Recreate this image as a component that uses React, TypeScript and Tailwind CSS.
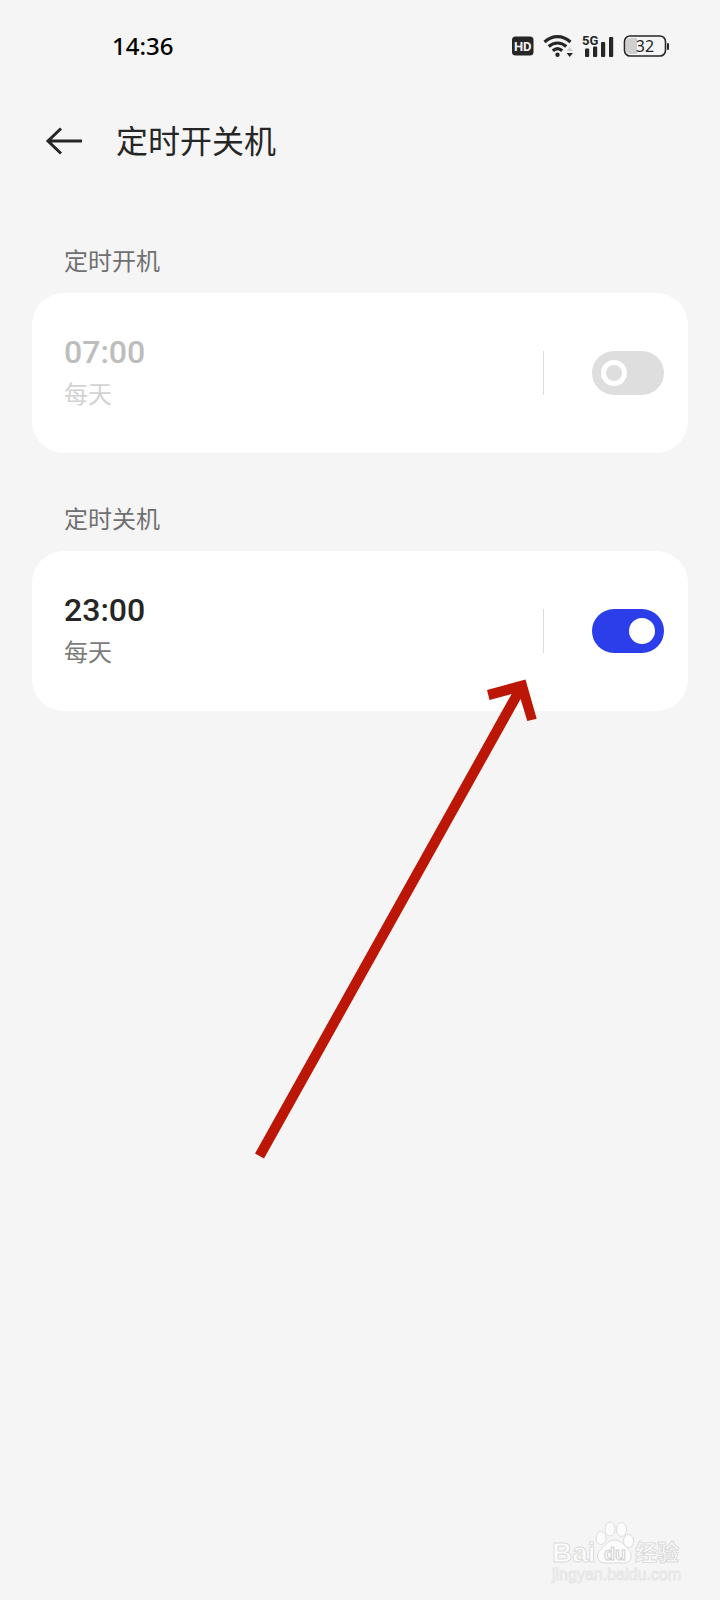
import { useState } from 'react';

interface ScheduleCardProps {
  id: string;
  label: string;
  time: string;
  repeat: string;
  defaultOn: boolean;
}

function HdIcon() {
  return (
    <svg width="22" height="20" viewBox="0 0 22 20" aria-label="HD">
      <rect x="0" y="0.500" width="21.500" height="19" rx="3.500" fill="#262626" />
      <text
        x="10.700"
        y="15"
        textAnchor="middle"
        fontFamily="Roboto, sans-serif"
        fontWeight="700"
        fontSize="13"
        fill="#f5f5f5"
      >
        HD
      </text>
    </svg>
  );
}

function WifiIcon() {
  return (
    <svg width="30" height="24" viewBox="0 0 30 24" fill="none" aria-label="Wi-Fi">
      <g stroke="#262626" strokeWidth="3.200">
        <path d="M1.500 8C9.500 0.800 19.500 0.800 27.500 8" />
        <path d="M5.700 12.500C11 7.800 18 7.800 23.300 12.500" />
        <path d="M9.800 16.800C12.700 14.200 16.300 14.200 19.200 16.800" />
      </g>
      <circle cx="14.500" cy="20.800" r="2.200" fill="#262626" />
      <path d="M23.500 17L26.700 13L30 17Z" fill="#cfcfcf" />
      <path d="M23.500 19L26.700 23L30 19Z" fill="#262626" />
    </svg>
  );
}

function SignalIcon() {
  return (
    <svg width="32" height="24" viewBox="0 0 32 24" aria-label="5G">
      <text
        x="0"
        y="11"
        fontFamily="Roboto, sans-serif"
        fontWeight="700"
        fontSize="13"
        fill="#262626"
      >
        5G
      </text>
      <g fill="#262626">
        <rect x="3" y="14.500" width="4.200" height="8.500" rx="1" />
        <rect x="11" y="12.500" width="4.200" height="10.500" rx="1" />
        <rect x="19" y="8" width="4.200" height="15" rx="1" />
        <rect x="27" y="3" width="4.200" height="20" rx="1" />
      </g>
    </svg>
  );
}

function BatteryIcon() {
  return (
    <svg width="46" height="22" viewBox="0 0 46 22" aria-label="32%">
      <path d="M7 3H14V19H7C4.500 19 3 17.500 3 15V7C3 4.500 4.500 3 7 3Z" fill="#cfcfcf" />
      <rect x="1.500" y="1" width="41" height="20" rx="5.500" fill="none" stroke="#262626" strokeWidth="1.600" />
      <rect x="44" y="8" width="2" height="7" rx="1" fill="#262626" />
      <text
        x="22"
        y="17"
        textAnchor="middle"
        fontFamily="'Noto Sans', sans-serif"
        fontSize="16"
        fill="#262626"
      >
        32
      </text>
    </svg>
  );
}

function StatusBar() {
  return (
    <div className="flex h-[91px] items-center justify-between pr-[51px] pl-28">
      <span className="font-['Noto_Sans',sans-serif] text-[24px] leading-8 font-medium text-black">14:36</span>
      <div className="flex items-center gap-[9px]">
        <HdIcon />
        <WifiIcon />
        <SignalIcon />
        <BatteryIcon />
      </div>
    </div>
  );
}

function ScheduleCard({ id, label, time, repeat, defaultOn }: ScheduleCardProps) {
  const [on, setOn] = useState(defaultOn);

  return (
    <section>
      <h2 className="px-8 text-[24px] leading-8 text-[#707070]">{label}</h2>
      <div className="mt-[17px] flex h-40 items-center rounded-[32px] bg-white pr-6 pl-8">
        <label htmlFor={id} className="flex-1">
          <span
            className={`block font-[Roboto,sans-serif] text-[32px] leading-10 font-medium ${on ? 'text-[#262626]' : 'text-[#bdbdbd]'}`}
          >
            {time}
          </span>
          <span
            className={`block text-[24px] leading-[42px] ${on ? 'text-[#7c7c7c]' : 'text-[#d2d2d2]'}`}
          >
            {repeat}
          </span>
        </label>
        <div className="mr-12 h-11 w-px bg-[#dcdcdc]" />
        <span className="grid h-11 w-18">
          <input
            id={id}
            type="checkbox"
            role="switch"
            checked={on}
            onChange={(e) => setOn(e.target.checked)}
            className="col-start-1 row-start-1 h-11 w-18 cursor-pointer appearance-none rounded-full bg-[#dedede] checked:bg-[#2c3eea]"
          />
          {/* knob: hollow ring when off, solid when on */}
          <span
            className={`pointer-events-none col-start-1 row-start-1 mx-[9px] size-[26px] self-center rounded-full border-white ${on ? 'justify-self-end border-[13px]' : 'border-[5px]'}`}
          />
        </span>
      </div>
    </section>
  );
}

function PointerArrow() {
  return (
    <svg
      className="pointer-events-none absolute top-[679px] left-[254px]"
      width="284"
      height="481"
      viewBox="254 679 284 481"
      aria-hidden="true"
    >
      <path
        d="M525.500 679.500L536.700 718.700L527.300 721L520.600 699L264 1158.500L255 1153.500L511.600 694L489.500 700L487 690Z"
        fill="#bc1706"
      />
    </svg>
  );
}

function Watermark() {
  return (
    <footer className="mt-auto flex justify-end pr-8 pb-2">
      <svg
        width="140"
        height="76"
        viewBox="548 1516 140 76"
        fill="#fcfcfc"
        stroke="#dcdcdc"
        strokeWidth="1"
        aria-label="Baidu经验"
      >
        <text x="552" y="1562" fontFamily="'Liberation Sans', sans-serif" fontWeight="700" fontSize="28">
          Bai
        </text>
        <ellipse cx="601" cy="1538" rx="5" ry="6.500" />
        <ellipse cx="610" cy="1529" rx="5" ry="7" />
        <ellipse cx="621.500" cy="1529.500" rx="5" ry="7" />
        <ellipse cx="628.500" cy="1541" rx="5" ry="6.500" />
        <path d="M615 1540C621 1540 624 1545 628 1549C634 1555 631 1563 624 1563H605C597 1563 595 1555 601 1549C606 1545 608 1540 615 1540Z" />
        <text x="604" y="1560" fontFamily="'Liberation Sans', sans-serif" fontWeight="700" fontSize="18" stroke="#d2d2d2">
          du
        </text>
        <text x="635" y="1560" fontFamily="'Noto Sans CJK SC', sans-serif" fontWeight="700" fontSize="22">
          经验
        </text>
        <text x="552" y="1580" fontFamily="'Liberation Sans', sans-serif" fontSize="16" stroke="#e6e6e6">
          jingyan.baidu.com
        </text>
      </svg>
    </footer>
  );
}

export default function App() {
  return (
    <div className="relative flex min-h-screen flex-col bg-[#f5f5f5] font-['Noto_Sans_CJK_SC',sans-serif]">
      <StatusBar />
      <header className="flex h-25 items-center gap-8 px-11">
        <button type="button" aria-label="返回">
          <svg width="40" height="40" viewBox="0 0 40 40" fill="none" stroke="#262626" strokeWidth="3">
            <path d="M38 20H4M17 7.500L4 20L17 32.500" />
          </svg>
        </button>
        <h1 className="pb-1 text-[32px] leading-10 text-[#262626]">定时开关机</h1>
      </header>
      <main className="flex flex-col gap-[49px] px-8 pt-[53px]">
        <ScheduleCard id="power-on" label="定时开机" time="07:00" repeat="每天" defaultOn={false} />
        <ScheduleCard id="power-off" label="定时关机" time="23:00" repeat="每天" defaultOn={true} />
      </main>
      <Watermark />
      <PointerArrow />
    </div>
  );
}
